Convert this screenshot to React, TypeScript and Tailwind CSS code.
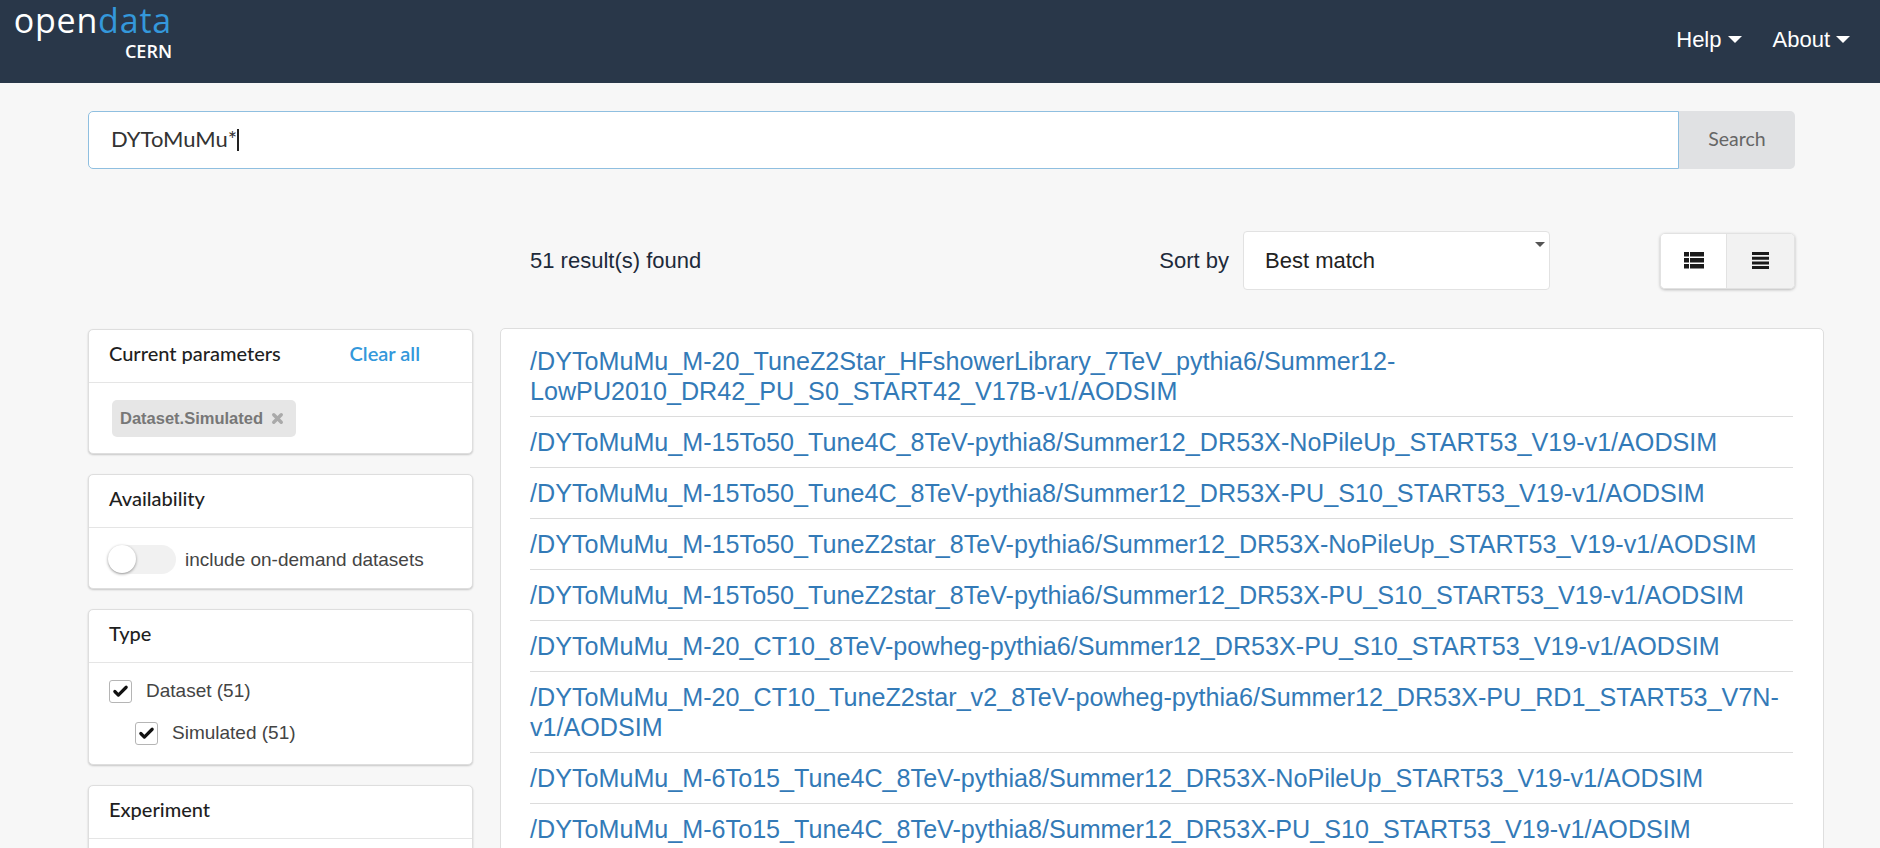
import { Check, X } from 'lucide-react';

const links = [
    '/DYToMuMu_M-20_TuneZ2Star_HFshowerLibrary_7TeV_pythia6/Summer12-LowPU2010_DR42_PU_S0_START42_V17B-v1/AODSIM',
    '/DYToMuMu_M-15To50_Tune4C_8TeV-pythia8/Summer12_DR53X-NoPileUp_START53_V19-v1/AODSIM',
    '/DYToMuMu_M-15To50_Tune4C_8TeV-pythia8/Summer12_DR53X-PU_S10_START53_V19-v1/AODSIM',
    '/DYToMuMu_M-15To50_TuneZ2star_8TeV-pythia6/Summer12_DR53X-NoPileUp_START53_V19-v1/AODSIM',
    '/DYToMuMu_M-15To50_TuneZ2star_8TeV-pythia6/Summer12_DR53X-PU_S10_START53_V19-v1/AODSIM',
    '/DYToMuMu_M-20_CT10_8TeV-powheg-pythia6/Summer12_DR53X-PU_S10_START53_V19-v1/AODSIM',
    '/DYToMuMu_M-20_CT10_TuneZ2star_v2_8TeV-powheg-pythia6/Summer12_DR53X-PU_RD1_START53_V7N-v1/AODSIM',
    '/DYToMuMu_M-6To15_Tune4C_8TeV-pythia8/Summer12_DR53X-NoPileUp_START53_V19-v1/AODSIM',
    '/DYToMuMu_M-6To15_Tune4C_8TeV-pythia8/Summer12_DR53X-PU_S10_START53_V19-v1/AODSIM',
];

function NavItem({ label }: { label: string }) {
    return (
        <span className="flex items-center gap-[6px]">
            {label}
            <span className="w-0 h-0 border-x-[7px] border-x-transparent border-t-[7px] border-t-white" />
        </span>
    );
}

function Card({ title, action, children }: { title: string; action?: string; children?: React.ReactNode }) {
    return (
        <div className="bg-white rounded-[5px] border border-[#dedede] shadow-[0_1px_2px_rgba(0,0,0,0.2)]">
            <div className="h-[53px] pl-[20px] pr-[52px] pb-[7px] flex items-center justify-between border-b border-[#e5e5e5] font-['Lato',sans-serif] text-[20px] font-medium text-[#1f1f1f]">
                <span>{title}</span>
                {action && <a className="text-[#3498db] font-semibold">{action}</a>}
            </div>
            {children}
        </div>
    );
}

function CheckRow({ label, indent }: { label: string; indent?: boolean }) {
    return (
        <div className={`flex items-center h-[42px] gap-[14px] ${indent ? 'pl-[46px]' : 'pl-[20px]'}`}>
            <span className="w-[23px] h-[23px] rounded-[3px] border border-[#b5b5b5] flex items-center justify-center">
                <Check size={17} strokeWidth={4.5} className="text-[#111]" />
            </span>
            <span className="text-[19px] text-[#444]">{label}</span>
        </div>
    );
}

export default function App() {
    return (
        <div className="h-[848px] overflow-hidden bg-[#f7f7f7] font-['Liberation_Sans',sans-serif]">
            <header className="h-[83px] bg-[#293749] flex items-start justify-between pl-[12px] pr-[30px]">
                <div className="w-[160px] mt-[2px] font-['Open_Sans',sans-serif] flex flex-col items-end">
                    <div className="text-[34px] leading-[36px] font-medium text-white tracking-[0.8px] whitespace-nowrap">
                        open<span className="text-[#3498db]">data</span>
                    </div>
                    <div className="text-[18px] leading-[18px] mt-[4px] text-white font-semibold">CERN</div>
                </div>
                <nav className="flex items-center gap-[31px] h-[78px] text-[22px] text-white">
                    <NavItem label="Help" />
                    <NavItem label="About" />
                </nav>
            </header>

            <main className="pl-[88px]">
                <div className="w-[1707px] mt-[28px] h-[58px] flex font-['Lato',sans-serif]">
                    <div className="flex-1 bg-white border border-[#8fbfe0] rounded-l-[5px] pl-[22px] flex items-center text-[22px] text-[#333]">
                        <span className="pb-[3px]">DYToMuMu*</span>
                        <span className="w-[2px] h-[22px] bg-[#222]" />
                    </div>
                    <button type="button" className="w-[116px] bg-[#e0e1e3] rounded-r-[5px] pb-[2px] text-[19.5px] text-[#666]">Search</button>
                </div>

                <div className="w-[1707px] mt-[62px] h-[59px] flex items-center text-[22px] text-[#1d2a3a]">
                    <span className="ml-[442px]">51 result(s) found</span>
                    <span className="ml-auto">Sort by</span>
                    <div className="ml-[14px] w-[307px] h-[59px] bg-white border border-[#e2e2e2] rounded-[4px] pl-[21px] flex items-center relative text-[#222]">
                        Best match
                        <span className="absolute right-[4px] top-[10px] w-0 h-0 border-x-[5px] border-x-transparent border-t-[5px] border-t-[#555]" />
                    </div>
                    <div className="ml-[110px] w-[135px] h-[56px] flex rounded-[5px] overflow-hidden border border-[#e2e2e2] shadow-[0_1px_3px_rgba(0,0,0,0.25)]">
                        <div className="flex-1 bg-white flex items-center justify-center">
                            <svg width="20" height="17" viewBox="0 0 20 17" fill="#1a1a1a" aria-hidden="true">
                                <path d="M0 0h5v4.5H0zM6 0h14v4.5H6zM0 6h5v4.5H0zM6 6h14v4.5H6zM0 12h5v4.5H0zM6 12h14v4.5H6z" />
                            </svg>
                        </div>
                        <div className="w-[68px] bg-[#f2f2f2] border-l border-[#e2e2e2] flex items-center justify-center">
                            <svg width="17" height="17" viewBox="0 0 17 17" fill="#1a1a1a" aria-hidden="true">
                                <path d="M0 0h17v3H0zM0 4.7h17v3H0zM0 9.4h17v3H0zM0 14h17v3H0z" />
                            </svg>
                        </div>
                    </div>
                </div>

                <div className="flex items-start gap-[27px] mt-[38px]">
                    <aside className="w-[385px] pt-[1px] flex flex-col gap-[20px] shrink-0">
                        <Card title="Current parameters" action="Clear all">
                            <div className="h-[70px] pl-[23px] flex items-center">
                                <span className="h-[37px] pl-[8px] pr-[11px] rounded-[5px] bg-[#e6e6e6] flex items-center gap-[7px] text-[16.5px] font-bold text-[#777]">
                                    Dataset.Simulated
                                    <X size={15} strokeWidth={5.5} className="text-[#aaa]" />
                                </span>
                            </div>
                        </Card>
                        <Card title="Availability">
                            <div className="h-[60px] pl-[19px] pt-[2px] flex items-center gap-[9px]">
                                <span className="w-[68px] h-[29px] rounded-full bg-[#f1f1f1] relative">
                                    <span className="absolute left-0 top-0 w-[28px] h-[28px] rounded-full bg-white shadow-[0_1px_3px_rgba(0,0,0,0.4)]" />
                                </span>
                                <span className="mt-[3px] text-[19px] text-[#444]">include on-demand datasets</span>
                            </div>
                        </Card>
                        <Card title="Type">
                            <div className="pt-[7px] pb-[10px]">
                                <CheckRow label="Dataset (51)" />
                                <CheckRow label="Simulated (51)" indent />
                            </div>
                        </Card>
                        <Card title="Experiment">
                            <div className="h-[100px]" />
                        </Card>
                    </aside>

                    <section className="w-[1324px] shrink-0 bg-white rounded-[5px] border border-[#dedede] pl-[29px] pr-[30px] pt-[7px] text-[25.15px] leading-[30px] text-[#337ab7]">
                        {links.map((link) => (
                            <div key={link} className="py-[10px] border-b border-[#dcdcdc] break-words">
                                <a>{link}</a>
                            </div>
                        ))}
                    </section>
                </div>
            </main>
        </div>
    );
}
